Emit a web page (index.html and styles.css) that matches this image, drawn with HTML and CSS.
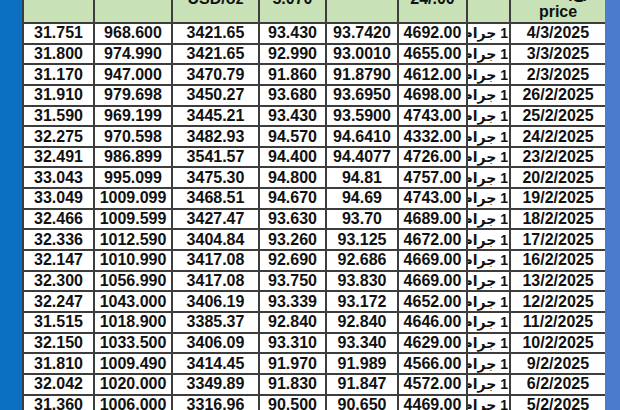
FILE: index.html
```html
<!DOCTYPE html>
<html lang="ar">
<head>
<meta charset="utf-8">
<title>أسعار الذهب</title>
<link rel="stylesheet" href="styles.css">
</head>
<body>
<div class="page">
  <div class="band band-left"></div>
  <div class="sheet">
    <table class="grid">
      <colgroup>
        <col class="c1"><col class="c2"><col class="c3"><col class="c4"><col class="c5"><col class="c6"><col class="c7"><col class="c8">
      </colgroup>
      <thead>
        <tr>
          <th class="hi">سعر الفضة</th>
          <th class="hi">سعر البلاتين</th>
          <th class="mid">سعر الأونصة<br>USD/oz</th>
          <th class="mid">سعر الدولار<br>5.070</th>
          <th class="hi">الدولار البنكي</th>
          <th class="mid">سعر الجرام<br>24/.00</th>
          <th class="hi">الوزن</th>
          <th class="low">التاريخ<br>Date (ج)<br>price</th>
        </tr>
      </thead>
      <tbody>
        <tr><td>31.751</td><td>968.600</td><td>3421.65</td><td>93.430</td><td>93.7420</td><td>4692.00</td><td class="unit">1 جرام</td><td>4/3/2025</td></tr>
        <tr><td>31.800</td><td>974.990</td><td>3421.65</td><td>92.990</td><td>93.0010</td><td>4655.00</td><td class="unit">1 جرام</td><td>3/3/2025</td></tr>
        <tr><td>31.170</td><td>947.000</td><td>3470.79</td><td>91.860</td><td>91.8790</td><td>4612.00</td><td class="unit">1 جرام</td><td>2/3/2025</td></tr>
        <tr><td>31.910</td><td>979.698</td><td>3450.27</td><td>93.680</td><td>93.6950</td><td>4698.00</td><td class="unit">1 جرام</td><td>26/2/2025</td></tr>
        <tr><td>31.590</td><td>969.199</td><td>3445.21</td><td>93.430</td><td>93.5900</td><td>4743.00</td><td class="unit">1 جرام</td><td>25/2/2025</td></tr>
        <tr><td>32.275</td><td>970.598</td><td>3482.93</td><td>94.570</td><td>94.6410</td><td>4332.00</td><td class="unit">1 جرام</td><td>24/2/2025</td></tr>
        <tr><td>32.491</td><td>986.899</td><td>3541.57</td><td>94.400</td><td>94.4077</td><td>4726.00</td><td class="unit">1 جرام</td><td>23/2/2025</td></tr>
        <tr><td>33.043</td><td>995.099</td><td>3475.30</td><td>94.800</td><td>94.81</td><td>4757.00</td><td class="unit">1 جرام</td><td>20/2/2025</td></tr>
        <tr><td>33.049</td><td>1009.099</td><td>3468.51</td><td>94.670</td><td>94.69</td><td>4743.00</td><td class="unit">1 جرام</td><td>19/2/2025</td></tr>
        <tr><td>32.466</td><td>1009.599</td><td>3427.47</td><td>93.630</td><td>93.70</td><td>4689.00</td><td class="unit">1 جرام</td><td>18/2/2025</td></tr>
        <tr><td>32.336</td><td>1012.590</td><td>3404.84</td><td>93.260</td><td>93.125</td><td>4672.00</td><td class="unit">1 جرام</td><td>17/2/2025</td></tr>
        <tr><td>32.147</td><td>1010.990</td><td>3417.08</td><td>92.690</td><td>92.686</td><td>4669.00</td><td class="unit">1 جرام</td><td>16/2/2025</td></tr>
        <tr><td>32.300</td><td>1056.990</td><td>3417.08</td><td>93.750</td><td>93.830</td><td>4669.00</td><td class="unit">1 جرام</td><td>13/2/2025</td></tr>
        <tr><td>32.247</td><td>1043.000</td><td>3406.19</td><td>93.339</td><td>93.172</td><td>4652.00</td><td class="unit">1 جرام</td><td>12/2/2025</td></tr>
        <tr><td>31.515</td><td>1018.900</td><td>3385.37</td><td>92.840</td><td>92.840</td><td>4646.00</td><td class="unit">1 جرام</td><td>11/2/2025</td></tr>
        <tr><td>32.150</td><td>1033.500</td><td>3406.09</td><td>93.310</td><td>93.340</td><td>4629.00</td><td class="unit">1 جرام</td><td>10/2/2025</td></tr>
        <tr><td>31.810</td><td>1009.490</td><td>3414.45</td><td>91.970</td><td>91.989</td><td>4566.00</td><td class="unit">1 جرام</td><td>9/2/2025</td></tr>
        <tr><td>32.042</td><td>1020.000</td><td>3349.89</td><td>91.830</td><td>91.847</td><td>4572.00</td><td class="unit">1 جرام</td><td>6/2/2025</td></tr>
        <tr><td>31.360</td><td>1006.000</td><td>3316.96</td><td>90.500</td><td>90.650</td><td>4469.00</td><td class="unit">1 جرام</td><td>5/2/2025</td></tr>
      </tbody>
    </table>
  </div>
  <div class="band band-right"></div>
</div>
</body>
</html>
```

FILE: styles.css
```css
html, body {
  margin: 0;
  padding: 0;
  background: #ffffff;
}

.page {
  display: flex;
  width: 620px;
  height: 410px;
  overflow: hidden;
  font-family: "Liberation Sans", Arial, "DejaVu Sans", sans-serif;
  color: #111111;
}

.band {
  flex: 0 0 auto;
  height: 100%;
}

.band-left {
  width: 22px;
  background: #0b6fc1;
}

.band-right {
  width: 15px;
  background: #4b7bcd;
}

.sheet {
  flex: 0 0 583px;
  height: 100%;
  overflow: hidden;
  background: #ffffff;
}

.grid {
  width: 583px;
  margin-top: -42px;
  table-layout: fixed;
  border-collapse: collapse;
}

.c1 { width: 71px; }
.c2 { width: 78px; }
.c3 { width: 87px; }
.c4 { width: 67px; }
.c5 { width: 72px; }
.c6 { width: 69px; }
.c7 { width: 43px; }
.c8 { width: 96px; }

.grid th,
.grid td {
  border: 2px solid #3d3d3d;
  padding: 0;
  text-align: center;
  white-space: nowrap;
  overflow: hidden;
}

.grid th {
  box-sizing: border-box;
  height: 64px;
  background: #c8e1b6;
  font-size: 16px;
  font-weight: bold;
  line-height: 19px;
  vertical-align: bottom;
}

.grid th.hi {
  padding-bottom: 34px;
}

.grid th.mid {
  padding-bottom: 14px;
}

.grid th.low {
  padding-bottom: 1px;
}

.grid td {
  height: 18.65px;
  background: #ffffff;
  font-size: 16px;
  font-weight: bold;
  line-height: 18px;
  vertical-align: middle;
}

.grid td.unit {
  direction: rtl;
  text-align: right;
  font-size: 14px;
  padding-right: 1px;
}
```
